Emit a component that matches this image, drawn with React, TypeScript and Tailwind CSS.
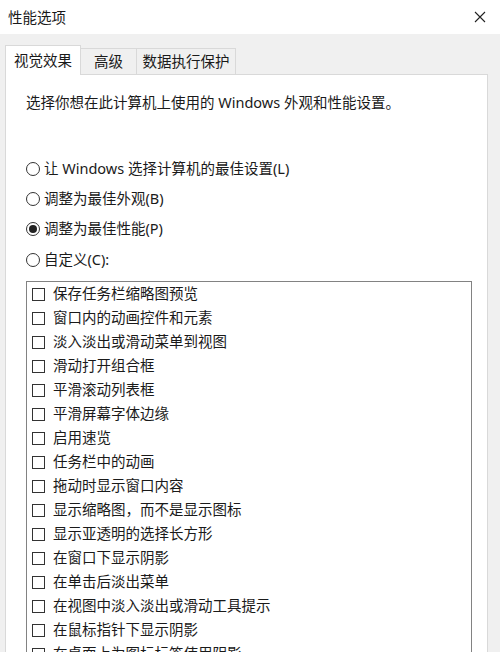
const items = [
  '保存任务栏缩略图预览',
  '窗口内的动画控件和元素',
  '淡入淡出或滑动菜单到视图',
  '滑动打开组合框',
  '平滑滚动列表框',
  '平滑屏幕字体边缘',
  '启用速览',
  '任务栏中的动画',
  '拖动时显示窗口内容',
  '显示缩略图，而不是显示图标',
  '显示亚透明的选择长方形',
  '在窗口下显示阴影',
  '在单击后淡出菜单',
  '在视图中淡入淡出或滑动工具提示',
  '在鼠标指针下显示阴影',
  '在桌面上为图标标签使用阴影',
];

const radios = [
  { label: '让 Windows 选择计算机的最佳设置(L)', checked: false },
  { label: '调整为最佳外观(B)', checked: false },
  { label: '调整为最佳性能(P)', checked: true },
  { label: '自定义(C):', checked: false },
];

function Radio({ checked }: { checked: boolean }) {
  return (
    <span className="w-[14px] h-[14px] rounded-full border border-[#333] bg-white flex items-center justify-center shrink-0">
      {checked && <span className="w-[8px] h-[8px] rounded-full bg-[#222]" />}
    </span>
  );
}

export default function App() {
  return (
    <div
      className="w-[500px] h-[652px] overflow-hidden bg-[#f0f0f0] text-[#1a1a1a] text-[14.5px]"
      style={{ fontFamily: '"Noto Sans", "Noto Sans CJK SC", sans-serif' }}
    >
      {/* title bar */}
      <div className="h-[34px] bg-white flex items-center justify-between pl-[8px] pr-[14px]">
        <span className="leading-none">性能选项</span>
        <svg width="12" height="12" viewBox="0 0 12 12" className="text-[#222]">
          <path d="M1 1 L11 11 M11 1 L1 11" stroke="currentColor" strokeWidth="1.1" fill="none" />
        </svg>
      </div>

      <div className="pl-[5px] pr-[12px] pt-[10px]">
        {/* tabs */}
        <div className="flex items-end h-[30px]">
          <div className="h-[30px] w-[76px] bg-white border border-b-0 border-[#d9d9d9] flex items-center justify-center relative top-[1px] z-10">
            视觉效果
          </div>
          <div className="h-[26px] w-[56px] border border-l-0 border-b-0 border-[#d9d9d9] bg-[#f0f0f0] flex items-center justify-center">
            高级
          </div>
          <div className="h-[26px] w-[99px] border border-l-0 border-b-0 border-[#d9d9d9] bg-[#f0f0f0] flex items-center justify-center">
            数据执行保护
          </div>
        </div>

        {/* panel */}
        <div className="bg-white border border-[#d9d9d9] h-[620px] pl-[20px]">
          <p className="mt-[17px] leading-[20px]">选择你想在此计算机上使用的 Windows 外观和性能设置。</p>

          <div className="mt-[42px] flex flex-col">
            {radios.map((r, i) => (
              <div
                key={r.label}
                className={`h-[30px] flex items-center gap-[4px] ${i === 3 ? 'mt-[1px]' : ''}`}
              >
                <Radio checked={r.checked} />
                <span>{r.label}</span>
              </div>
            ))}
          </div>

          <div className="mt-[6px] w-[446px] border border-[#828282] pl-[5px] h-[400px]">
            {items.map((t) => (
              <div key={t} className="h-[24px] flex items-center gap-[8px]">
                <span className="w-[13px] h-[13px] border border-[#333] bg-white shrink-0" />
                <span>{t}</span>
              </div>
            ))}
          </div>
        </div>
      </div>
    </div>
  );
}
